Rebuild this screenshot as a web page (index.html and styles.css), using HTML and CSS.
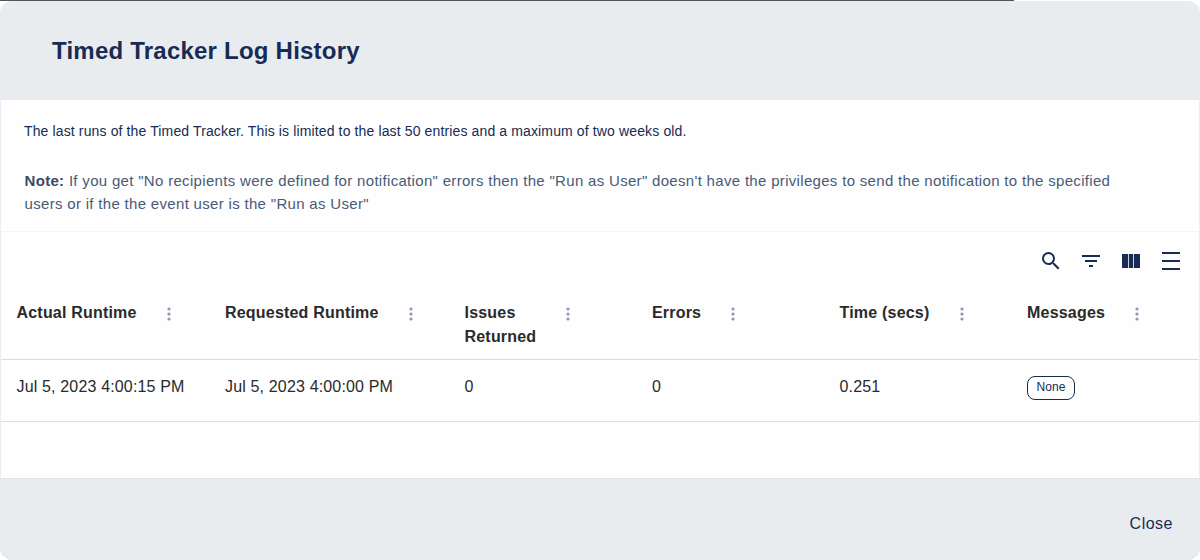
FILE: index.html
```html
<!DOCTYPE html>
<html lang="en">
<head>
<meta charset="utf-8">
<title>Timed Tracker Log History</title>
<link rel="stylesheet" href="styles.css">
</head>
<body>
<div class="backdrop-strip"></div>
<div class="modal">
  <header class="modal-header"><h2 class="modal-title">Timed Tracker Log History</h2></header>
  <main class="modal-body">
    <section class="intro">
      <p class="intro-lead">The last runs of the Timed Tracker. This is limited to the last 50 entries and a maximum of two weeks old.</p>
      <p class="intro-note"><strong>Note:</strong> If you get "No recipients were defined for notification" errors then the "Run as User" doesn't have the privileges to send the notification to the specified users or if the the event user is the "Run as User"</p>
    </section>
    <div class="toolbar">
      <svg class="tool" viewBox="0 0 24 24"><path d="M15.5 14h-.79l-.28-.27A6.47 6.47 0 0 0 16 9.5 6.5 6.5 0 1 0 9.5 16c1.61 0 3.09-.59 4.23-1.57l.27.28v.79l5 4.99L20.49 19l-4.99-5zm-6 0C7.01 14 5 11.99 5 9.5S7.01 5 9.5 5 14 7.01 14 9.5 11.99 14 9.5 14z"/></svg>
      <svg class="tool" viewBox="0 0 24 24"><path d="M10 18h4v-2h-4v2zM3 6v2h18V6H3zm3 7h12v-2H6v2z"/></svg>
      <svg class="tool" viewBox="0 0 24 24"><path d="M3 5h6v14H3zM9.800 5h4.400v14H9.800zM15 5h6v14h-6z"/></svg>
      <svg class="tool" viewBox="0 0 24 24"><path d="M3 3h18v2H3zM3 11h18v2H3zM3 19h18v2H3z"/></svg>
    </div>
    <div class="table">
      <div class="row head">
        <div class="cell"><span class="label">Actual Runtime</span><svg class="kebab" viewBox="0 0 4 14"><circle cx="2" cy="2" r="1.6"/><circle cx="2" cy="7" r="1.6"/><circle cx="2" cy="12" r="1.6"/></svg></div>
        <div class="cell"><span class="label">Requested Runtime</span><svg class="kebab" viewBox="0 0 4 14"><circle cx="2" cy="2" r="1.6"/><circle cx="2" cy="7" r="1.6"/><circle cx="2" cy="12" r="1.6"/></svg></div>
        <div class="cell"><span class="label">Issues Returned</span><svg class="kebab" viewBox="0 0 4 14"><circle cx="2" cy="2" r="1.6"/><circle cx="2" cy="7" r="1.6"/><circle cx="2" cy="12" r="1.6"/></svg></div>
        <div class="cell"><span class="label">Errors</span><svg class="kebab" viewBox="0 0 4 14"><circle cx="2" cy="2" r="1.6"/><circle cx="2" cy="7" r="1.6"/><circle cx="2" cy="12" r="1.6"/></svg></div>
        <div class="cell"><span class="label">Time (secs)</span><svg class="kebab" viewBox="0 0 4 14"><circle cx="2" cy="2" r="1.6"/><circle cx="2" cy="7" r="1.6"/><circle cx="2" cy="12" r="1.6"/></svg></div>
        <div class="cell"><span class="label">Messages</span><svg class="kebab" viewBox="0 0 4 14"><circle cx="2" cy="2" r="1.6"/><circle cx="2" cy="7" r="1.6"/><circle cx="2" cy="12" r="1.6"/></svg></div>
      </div>
      <div class="row data">
        <div class="cell">Jul 5, 2023 4:00:15 PM</div>
        <div class="cell">Jul 5, 2023 4:00:00 PM</div>
        <div class="cell">0</div>
        <div class="cell">0</div>
        <div class="cell">0.251</div>
        <div class="cell"><span class="chip">None</span></div>
      </div>
    </div>
  </main>
  <footer class="modal-footer"><button class="close" type="button">Close</button></footer>
</div>
</body>
</html>
```
FILE: styles.css
```css
html, body { margin: 0; height: 100%; }
body {
  position: relative;
  width: 1200px;
  height: 560px;
  overflow: hidden;
  background: #fff;
  font-family: "Liberation Sans", Arial, sans-serif;
}
.backdrop-strip {
  position: absolute;
  top: 0;
  left: 0;
  width: 1014px;
  height: 1px;
  background: #555;
}
.modal {
  position: absolute;
  inset: 1px 0 0 0;
  display: flex;
  flex-direction: column;
  border-radius: 12px;
  overflow: hidden;
  background: #fdfefd;
}
.modal-header {
  height: 99px;
  flex: none;
  display: flex;
  align-items: center;
  padding-left: 52px;
  background: #e8ecef;
}
.modal-title {
  margin: 0;
  font-size: 24px;
  line-height: 32px;
  font-weight: 700;
  letter-spacing: 0.22px;
  color: #172b54;
}
.modal-body {
  flex: 1;
  display: flex;
  flex-direction: column;
  border-left: 1px solid #e8eef4;
  border-right: 1px solid #e8eef4;
}
.intro {
  height: 132px;
  flex: none;
  box-sizing: border-box;
  padding: 21px 70px 0 23px;
  border-bottom: 1px solid #f3f5f6;
  font-size: 14px;
}
.intro-lead {
  margin: 0;
  line-height: 20px;
  letter-spacing: 0.13px;
  color: #172b54;
}
.intro-note {
  margin: 28px 0 0 0.500px;
  font-size: 15px;
  line-height: 23px;
  letter-spacing: 0.315px;
  color: #4a5a78;
}
.intro-note strong { color: #3d4a66; }
.toolbar {
  flex: none;
  display: flex;
  justify-content: flex-end;
  gap: 16px;
  height: 33px;
  padding: 17px 16px 0 0;
}
.tool { width: 24px; height: 24px; fill: #172b54; }
.table { flex: none; }
.row {
  display: grid;
  grid-template-columns: 208.500px 239.500px 187.500px 187.500px 187.500px 1fr;
  color: #2a2a2a;
  font-size: 16px;
  line-height: 24px;
}
.head {
  height: 78px;
  box-sizing: border-box;
  padding-top: 19px;
  border-bottom: 1px solid #d8dadc;
  font-weight: 700;
  letter-spacing: 0.2px;
}
.head .cell { display: flex; align-items: flex-start; padding-left: 15.500px; }
.label { flex: none; }
.head .cell:nth-child(1) .label { width: 150px; }
.head .cell:nth-child(2) .label { width: 184px; }
.head .cell:nth-child(3) .label { width: 101.500px; }
.head .cell:nth-child(4) .label { width: 78.500px; }
.head .cell:nth-child(5) .label { width: 120.500px; }
.head .cell:nth-child(6) .label { width: 108px; }
.kebab { width: 4px; height: 14px; margin-top: 6px; fill: #8d97ae; }
.data {
  height: 62px;
  align-items: center;
  box-sizing: border-box;
  padding-bottom: 8px;
  border-bottom: 1px solid #dcdedf;
  letter-spacing: 0.16px;
}
.data .cell { padding-left: 15.500px; }
.chip {
  display: inline-block;
  box-sizing: border-box;
  width: 48px;
  height: 24px;
  margin-top: 2px;
  border: 1px solid #172b54;
  border-radius: 8px;
  font-size: 12px;
  line-height: 21px;
  letter-spacing: 0.1px;
  text-align: center;
  color: #172b54;
  vertical-align: middle;
}
.modal-footer {
  flex: none;
  height: 82px;
  display: flex;
  justify-content: flex-end;
  align-items: flex-start;
  margin-top: auto;
  background: #e8ecef;
  border-top: 1px solid #e3e6e8;
  box-sizing: border-box;
}
.close {
  margin: 33px 27px 0 0;
  padding: 0;
  border: 0;
  background: none;
  font: inherit;
  font-size: 16px;
  line-height: 24px;
  letter-spacing: 0.5px;
  color: #172b54;
}
```
